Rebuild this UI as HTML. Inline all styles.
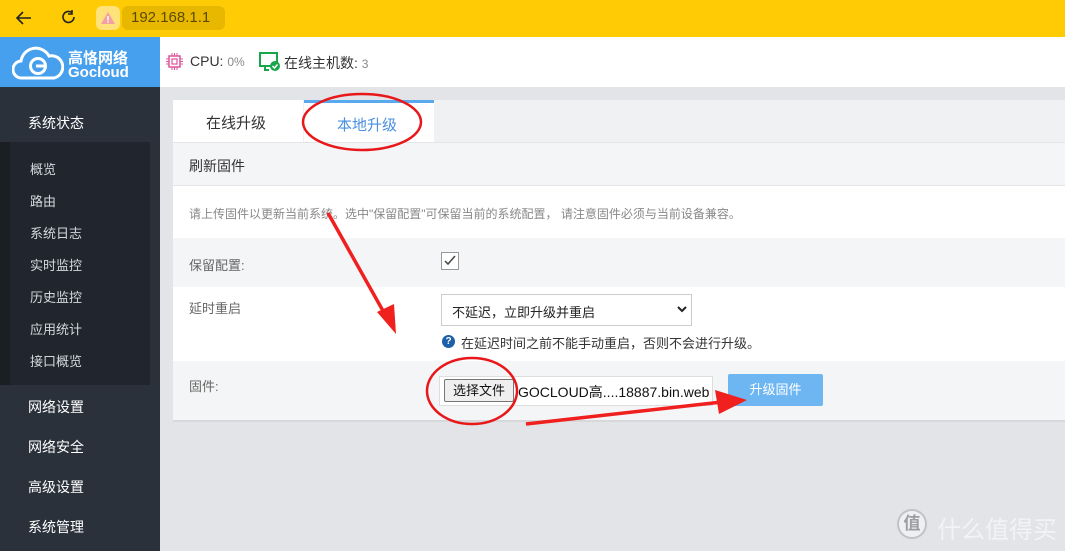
<!DOCTYPE html>
<html><head><meta charset="utf-8"><style>
*{margin:0;padding:0;box-sizing:border-box}
body{width:1065px;height:551px;overflow:hidden;position:relative;font-family:"Liberation Sans","Noto Sans CJK SC",sans-serif;background:#e2e4e8}
.a{position:absolute}
.top{left:0;top:0;width:1065px;height:37px;background:#ffcb05}
.logo{left:0;top:37px;width:160px;height:50px;background:#47a0ed}
.hdr{left:160px;top:37px;width:905px;height:50px;background:#fff}
.side{left:0;top:87px;width:160px;height:464px;background:#2b313b}
.sub{left:10px;top:142px;width:140px;height:243px;background:#21262e}
.strip{left:0;top:142px;width:10px;height:243px;background:#1b1e23}
.si{color:#d4d8de;font-size:13px;left:30px}
.mi{color:#fff;font-size:14px;left:28px}
.row{left:173px;width:892px}
.lbl{left:189px;font-size:13px;color:#666}
</style></head><body>
<div class="a top"></div>
<svg class="a" style="left:14px;top:8px" width="20" height="20" viewBox="0 0 20 20"><path d="M17 10H4M9 4L3 10l6 6" stroke="#222" stroke-width="1.6" fill="none"/></svg>
<svg class="a" style="left:59px;top:7px" width="20" height="20" viewBox="0 0 20 20"><path d="M15 10a5.5 5.5 0 1 1-2-4.3M13 3v4h-4" stroke="#222" stroke-width="1.6" fill="none"/></svg>
<div class="a" style="left:96px;top:6px;width:24px;height:24px;border-radius:6px;background:#ffe27a"></div>
<svg class="a" style="left:100px;top:10px" width="16" height="16" viewBox="0 0 16 16"><path d="M8 2L15 14H1z" fill="#f3a0a0"/><rect x="7.3" y="6" width="1.4" height="4.5" fill="#fff"/><rect x="7.3" y="11.3" width="1.4" height="1.4" fill="#fff"/></svg>
<div class="a" style="left:122px;top:6px;width:103px;height:24px;border-radius:6px;background:#e8b800"></div>
<div class="a" style="left:131px;top:9px;font-size:15px;color:#5a4a00">192.168.1.1</div>
<div class="a logo"></div>
<svg class="a" style="left:12px;top:45px" width="52" height="36" viewBox="0 0 52 36"><path d="M10 33a8.5 8.5 0 0 1-1-17 15 15 0 0 1 28-5 10 10 0 0 1 5 22z" fill="none" stroke="#fff" stroke-width="3"/><circle cx="26" cy="21" r="7.5" fill="none" stroke="#fff" stroke-width="3"/><rect x="24" y="19.5" width="9" height="3" fill="#fff"/></svg>
<div class="a" style="left:68px;top:47px;color:#fff;font-size:15px;font-weight:bold">高恪网络</div>
<div class="a" style="left:68px;top:64px;color:#fff;font-size:15px;font-weight:bold">Gocloud</div>
<div class="a hdr"></div>
<svg class="a" style="left:166px;top:53px" width="17" height="17" viewBox="0 0 17 17"><rect x="3" y="3" width="11" height="11" fill="none" stroke="#e0559b" stroke-width="1.5"/><rect x="6" y="6" width="5" height="5" fill="none" stroke="#e0559b" stroke-width="1.2"/><path d="M6 0v3M8.5 0v3M11 0v3M6 14v3M8.5 14v3M11 14v3M0 6h3M0 8.5h3M0 11h3M14 6h3M14 8.5h3M14 11h3" stroke="#e0559b"/></svg>
<div class="a" style="left:190px;top:53px;font-size:14px;color:#333">CPU: <span style="font-size:12px;color:#888">0%</span></div>
<svg class="a" style="left:259px;top:52px" width="22" height="20" viewBox="0 0 22 20"><rect x="1" y="1" width="17" height="13" fill="none" stroke="#19a64a" stroke-width="2"/><path d="M6 14v4h4" stroke="#19a64a" stroke-width="2" fill="none"/><circle cx="16" cy="14" r="5" fill="#19a64a"/><path d="M13.5 14l2 2 3-3.5" stroke="#fff" stroke-width="1.5" fill="none"/></svg>
<div class="a" style="left:284px;top:53px;font-size:14px;color:#333">在线主机数: <span style="font-size:12px;color:#888">3</span></div>
<div class="a side"></div><div class="a strip"></div><div class="a sub"></div>
<div class="a mi" style="top:113px">系统状态</div>
<div class="a si" style="top:159px">概览</div>
<div class="a si" style="top:191px">路由</div>
<div class="a si" style="top:223px">系统日志</div>
<div class="a si" style="top:255px">实时监控</div>
<div class="a si" style="top:287px">历史监控</div>
<div class="a si" style="top:319px">应用统计</div>
<div class="a si" style="top:351px">接口概览</div>
<div class="a mi" style="top:397px">网络设置</div>
<div class="a mi" style="top:437px">网络安全</div>
<div class="a mi" style="top:477px">高级设置</div>
<div class="a mi" style="top:517px">系统管理</div>
<div class="a" style="left:173px;top:100px;width:892px;height:42px;background:#f0f1f3"></div>
<div class="a" style="left:173px;top:100px;width:130px;height:42px;background:#fff"></div>
<div class="a" style="left:304px;top:100px;width:130px;height:42px;background:#fff;border-top:3px solid #5aa9ef"></div>
<div class="a" style="left:206px;top:112px;font-size:15px;color:#333">在线升级</div>
<div class="a" style="left:337px;top:114px;font-size:15px;color:#4a8fe0">本地升级</div>
<div class="a row" style="top:142px;height:44px;background:#f4f5f7;border-top:1px solid #e2e4e8;border-bottom:1px solid #e2e4e8"></div>
<div class="a" style="left:189px;top:156px;font-size:14px;color:#333">刷新固件</div>
<div class="a row" style="top:186px;height:52px;background:#fff"></div>
<div class="a" style="left:189px;top:205px;font-size:12px;color:#888">请上传固件以更新当前系统。选中"保留配置"可保留当前的系统配置， 请注意固件必须与当前设备兼容。</div>
<div class="a row" style="top:238px;height:49px;background:#f4f5f7"></div>
<div class="a lbl" style="top:255px">保留配置:</div>
<div class="a" style="left:441px;top:252px;width:18px;height:18px;border:1px solid #999;background:#fff"></div>
<svg class="a" style="left:443px;top:254px" width="14" height="14"><path d="M2 7l3 3 7-8" stroke="#444" stroke-width="1.5" fill="none"/></svg>
<div class="a row" style="top:287px;height:74px;background:#fff"></div>
<div class="a lbl" style="top:298px">延时重启</div>
<div class="a" style="left:441px;top:294px;width:251px;height:32px;border:1px solid #ccc;background:#fff;font-size:13px;color:#222;padding:7px 10px">不延迟，立即升级并重启</div>
<svg class="a" style="left:677px;top:306px" width="10" height="8"><path d="M1 1l4 4 4-4" stroke="#222" stroke-width="2" fill="none"/></svg>
<div class="a" style="left:442px;top:335px;width:13px;height:13px;border-radius:50%;background:#1d5fa8;color:#fff;font-size:10px;font-weight:bold;text-align:center;line-height:13px">?</div>
<div class="a" style="left:461px;top:333px;font-size:13px;color:#333">在延迟时间之前不能手动重启，否则不会进行升级。</div>
<div class="a row" style="top:361px;height:59px;background:#f4f5f7"></div>
<div class="a lbl" style="top:376px">固件:</div>
<div class="a" style="left:439px;top:376px;width:274px;height:30px;border:1px solid #ddd;background:#fff"></div>
<div class="a" style="left:444px;top:379px;width:70px;height:23px;border:1px solid #777;background:#efefef;border-radius:2px;font-size:13px;text-align:center;line-height:21px;color:#111">选择文件</div>
<div class="a" style="left:518px;top:382px;font-size:14px;color:#111">GOCLOUD高....18887.bin.web</div>
<div class="a" style="left:728px;top:374px;width:95px;height:32px;background:#6db6f2;color:#fff;font-size:13px;text-align:center;line-height:32px;border-radius:2px">升级固件</div>
<div class="a" style="left:173px;top:420px;width:892px;height:2px;background:#d6d8dc"></div>
<svg class="a" style="left:0;top:0" width="1065" height="551">
<ellipse cx="362" cy="122" rx="59" ry="28" fill="none" stroke="#e8181a" stroke-width="2.5"/>
<ellipse cx="472" cy="391" rx="45" ry="33" fill="none" stroke="#e8181a" stroke-width="2.5"/>
<path d="M328 213L387 318" stroke="#f0201e" stroke-width="3.5"/><path d="M377 312l19 22-2-30z" fill="#f0201e"/>
<path d="M526 424L722 402" stroke="#f0201e" stroke-width="3.5"/><path d="M715 390l32 10-28 14z" fill="#f0201e"/>
</svg>
<div class="a" style="left:897px;top:509px;width:30px;height:30px;border-radius:50%;background:#f0f0f2;border:2px solid #c0c2c6;color:#9a9da2;font-size:17px;text-align:center;line-height:26px;font-weight:bold">值</div>
<div class="a" style="left:937px;top:510px;font-size:24px;color:#f3f3f5">什么值得买</div>
</body></html>
